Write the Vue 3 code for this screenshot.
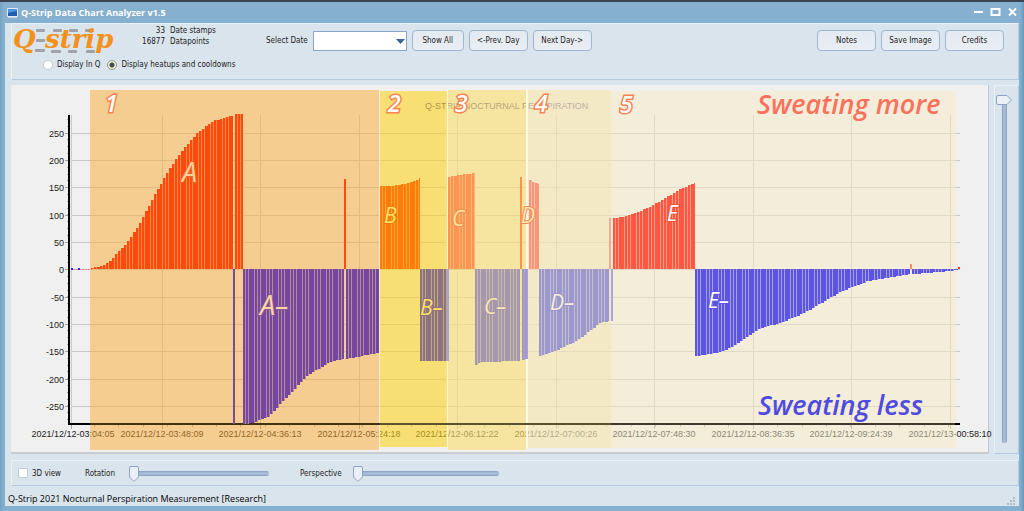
<script setup>
import { ref } from 'vue'

const mode = ref('heat')
const view3d = ref(false)
const rotation = ref(0)
const perspective = ref(0)
const zoom = ref(100)

const yTicks = [250, 200, 150, 100, 50, 0, -50, -100, -150, -200, -250].map((value, i) => ({
  value,
  y: Math.round(132.8 + i * 27.3)
}))
const yMinor = Array.from({ length: 45 }, (_, i) => Math.round(119 + i * 6.82))

const xTicks = [
  [73, '2021/12/12-03:04:05'],
  [162, '2021/12/12-03:48:09'],
  [260, '2021/12/12-04:36:13'],
  [359, '2021/12/12-05:24:18'],
  [457, '2021/12/12-06:12:22'],
  [556, '2021/12/12-07:00:26'],
  [654, '2021/12/12-07:48:30'],
  [753, '2021/12/12-08:36:35'],
  [851, '2021/12/12-09:24:39'],
  [950, '2021/12/13-00:58:10']
].map(([x, text]) => ({ x, text }))
const xMinor = Array.from({ length: 36 }, (_, i) => Math.round(94 + i * 24.4))

const regions = [
  { x: 90, y: 90, w: 289, h: 360, fill: 'rgba(251,169,49,.5)' },
  { x: 380, y: 91, w: 67, h: 356, fill: 'rgba(251,211,32,.6)' },
  { x: 448, y: 90, w: 78, h: 360, fill: 'rgba(248,222,117,.65)' },
  { x: 528, y: 90, w: 83, h: 358, fill: 'rgba(243,230,178,.7)' },
  { x: 611, y: 91, w: 345, h: 357, fill: 'rgba(245,233,195,.5)' }
]

const ZERO = 269
const series = [
  { dark: '#ff4a0c', light: '#fd8a4c', pts: [[91, 268], [98, 267], [106, 264], [113, 258], [118, 252], [127, 243], [140, 223], [153, 198], [167, 173], [180, 153], [197, 133], [213, 121], [230, 116], [233, 116]] },
  { dark: '#ff4a0c', light: '#fd8a4c', pts: [[235, 114], [243, 114]] },
  { dark: '#7a4aa0', light: '#7a4aa0', pts: [[233, 424], [235, 424]] },
  { dark: '#7547a0', light: '#b48c96', pts: [[243, 424], [252, 423], [268, 417], [287, 397], [308, 375], [332, 361], [344, 359]] },
  { dark: '#ff4a0c', light: '#ff4a0c', pts: [[344, 179], [346, 179]] },
  { dark: '#7547a0', light: '#b48c96', pts: [[346, 359], [362, 356], [379, 353]] },
  { dark: '#ff7c0a', light: '#fca638', pts: [[380, 186], [392, 186], [403, 184], [413, 182], [420, 178]] },
  { dark: '#8d7280', light: '#bfaa7c', pts: [[420, 361], [447, 361]] },
  { dark: '#a6a2e0', light: '#a6a2e0', pts: [[447, 361], [449, 361]] },
  { dark: '#fb9650', light: '#f9b67c', pts: [[448, 177], [460, 175], [475, 173]] },
  { dark: '#a598ad', light: '#cabca8', pts: [[475, 366], [480, 362], [520, 361]] },
  { dark: '#fb9650', light: '#fb9650', pts: [[520, 177], [522, 177]] },
  { dark: '#a598c0', light: '#a6a2e8', pts: [[522, 360], [528, 359]] },
  { dark: '#f8977a', light: '#f5bca4', pts: [[529, 180], [539, 184]] },
  { dark: '#9c97cc', light: '#c4bdca', pts: [[539, 356], [553, 352], [563, 347], [577, 341], [587, 333], [600, 323], [609, 321]] },
  { dark: '#f9a890', light: '#f9a890', pts: [[609, 218], [611, 218]] },
  { dark: '#a9a5e4', light: '#a9a5e4', pts: [[611, 321], [613, 321]] },
  { dark: '#ff5742', light: '#f89c86', pts: [[613, 218], [623, 217], [633, 214], [650, 207], [667, 197], [680, 189], [695, 183]] },
  { dark: '#5c55e2', light: '#a5a0dc', pts: [[695, 356], [703, 355], [717, 353], [730, 348], [743, 340], [760, 328], [780, 323], [800, 315], [813, 308], [840, 292], [868, 281], [887, 278], [910, 274]] },
  { dark: '#f98a74', light: '#f98a74', pts: [[910, 264], [912, 264]] },
  { dark: '#5c55e2', light: '#a5a0dc', pts: [[912, 274], [940, 272], [958, 270]] }
]

function heightAt(pts, x) {
  for (let i = 1; i < pts.length; i++) {
    const [ax, ay] = pts[i - 1]
    const [bx, by] = pts[i]
    if (x <= bx) return ay + ((by - ay) * Math.max(0, x - ax)) / (bx - ax)
  }
  return pts[pts.length - 1][1]
}

function column(x, w, y) {
  return `M${x} ${ZERO}V${Math.round(y)}h${w}V${ZERO}z`
}

const bars = series.map((s) => {
  const start = s.pts[0][0]
  const end = s.pts[s.pts.length - 1][0]
  let back = ''
  let front = ''
  for (let x = start, i = 0; x < end; x += 3, i++) {
    const w = Math.min(3, end - x)
    const y = heightAt(s.pts, x + 1)
    back += column(x, w, y)
    front += column(x, i % 4 === 2 ? w : Math.min(2, w), y)
  }
  return { ...s, back, front }
})

const numbers = [
  { t: '1', x: 105, y: 112 }, { t: '2', x: 388, y: 112 }, { t: '3', x: 455, y: 112 },
  { t: '4', x: 535, y: 112 }, { t: '5', x: 620, y: 113 }
]
const letters = [
  { t: 'A', x: 182, y: 182, c: '#fbd495', o: '#f0602c', s: 27 },
  { t: 'A–', x: 260, y: 315, c: '#fbd8a8', o: '#8a5a90', s: 27 },
  { t: 'B', x: 384, y: 223, c: '#ffe066', o: '#f08010', s: 21 },
  { t: 'B–', x: 420, y: 315, c: '#ffe066', o: '#8d7280', s: 21 },
  { t: 'C', x: 452, y: 226, c: '#f9e49c', o: '#f59050', s: 21 },
  { t: 'C–', x: 484, y: 314, c: '#f9e8ae', o: '#a598ad', s: 21 },
  { t: 'D', x: 521, y: 223, c: '#fbe6a8', o: '#f08a5c', s: 21 },
  { t: 'D–', x: 550, y: 310, c: '#f7efd6', o: '#9c97cc', s: 21 },
  { t: 'E', x: 667, y: 221, c: '#ffffff', o: '#f0503c', s: 21 },
  { t: 'E–', x: 708, y: 308, c: '#ffffff', o: '#5c55e2', s: 21 }
]
</script>

<template>
  <div class="window">
    <header class="titlebar">
      <svg class="appicon" width="11" height="10" viewBox="0 0 11 10" aria-hidden="true">
        <rect x="0" y="0" width="11" height="9" rx="1" fill="#dfeaf5" />
        <rect x="1" y="1" width="9" height="7" fill="#1d5cae" />
        <path d="M1 1h9v2L1 5z" fill="#4f93dc" />
        <rect x="1" y="9" width="9" height="1" fill="#c9d6e4" />
      </svg>
      <h1>Q-Strip Data Chart Analyzer v1.5</h1>
      <div class="winbtns">
        <button type="button" aria-label="Minimize">
          <svg width="11" height="10" viewBox="0 0 11 10"><path d="M1 4h9" stroke="#fff" stroke-width="2" /></svg>
        </button>
        <button type="button" aria-label="Maximize">
          <svg width="11" height="10" viewBox="0 0 11 10"><path d="M1.500 1h8v6h-8z" fill="none" stroke="#fff" stroke-width="2" /></svg>
        </button>
        <button type="button" aria-label="Close">
          <svg width="11" height="10" viewBox="0 0 11 10"><path d="M2 .5l7 7M9 .5l-7 7" stroke="#fff" stroke-width="2" /></svg>
        </button>
      </div>
    </header>

    <main class="client">
      <section class="panel toolbar">
        <div class="info">
          <div class="inforow">
            <svg class="logo" width="104" height="32" viewBox="0 0 104 32" role="img" aria-label="Q-strip">
              <g fill="#9fa3a8">
                <rect x="23" y="5" width="9" height="3" rx="1" /><rect x="40" y="5" width="9" height="3" rx="1" />
                <rect x="56" y="5" width="9" height="3" rx="1" /><rect x="72" y="5" width="9" height="3" rx="1" />
                <rect x="23" y="15" width="9" height="3" rx="1" />
                <rect x="22" y="25" width="10" height="3" rx="1" /><rect x="38" y="26" width="10" height="3" rx="1" />
                <rect x="55" y="26" width="9" height="3" rx="1" /><rect x="73" y="26" width="9" height="3" rx="1" />
              </g>
              <text class="logotext" x="0" y="24">Q</text>
              <text class="logotext" x="32" y="24">strip</text>
            </svg>
            <dl class="counts">
              <dd>33</dd><dt>Date stamps</dt>
              <dd>16877</dd><dt>Datapoints</dt>
            </dl>
          </div>
          <div class="radios">
            <label><input v-model="mode" type="radio" name="mode" value="q" />Display In Q</label>
            <label><input v-model="mode" type="radio" name="mode" value="heat" />Display heatups and cooldowns</label>
          </div>
        </div>
        <div class="actions">
          <label for="date">Select Date</label>
          <span class="combo">
            <select id="date"><option value=""></option></select>
            <svg width="9" height="5" viewBox="0 0 9 5" aria-hidden="true"><path d="M0 0h9L4.500 5z" fill="#3f5f97" /></svg>
          </span>
          <button type="button" class="btn narrow">Show All</button>
          <button type="button" class="btn">&lt;-Prev. Day</button>
          <button type="button" class="btn">Next Day-&gt;</button>
          <span class="spacer"></span>
          <button type="button" class="btn">Notes</button>
          <button type="button" class="btn">Save Image</button>
          <button type="button" class="btn">Credits</button>
        </div>
      </section>

      <section class="middle">
        <div class="chart">
          <svg viewBox="11 85 977 367" role="img" aria-label="Q-Strip nocturnal perspiration">
            <g shape-rendering="crispEdges">
              <path v-for="t in yTicks" :key="'g' + t.value" :d="`M71 ${t.y + 0.5}H960`" class="grid" />
              <path v-for="t in xTicks" :key="'v' + t.x" :d="`M${(t.x === 73 ? 71 : t.x) + 0.5} 115V424`" class="grid" />
              <path v-for="t in yTicks" :key="'t' + t.value" :d="`M65 ${t.y + 0.5}h4`" class="tick" />
              <path v-for="y in yMinor" :key="'m' + y" :d="`M67 ${y + 0.5}h2`" class="tick" />
              <path v-for="t in xTicks" :key="'x' + t.x" :d="`M${(t.x === 73 ? 71 : t.x) + 0.5} 425v4`" class="tick" />
              <path v-for="x in xMinor" :key="'n' + x" :d="`M${x + 0.5} 425v2`" class="tick" />
            </g>
            <text class="title" x="425" y="109">Q-STRIP NOCTURNAL PERSPIRATION</text>
            <text v-for="t in yTicks" :key="t.value" class="ylabel" x="64" :y="t.y + 4">{{ t.value }}</text>
            <text v-for="t in xTicks" :key="t.text" class="xlabel" :x="t.x" y="437">{{ t.text }}</text>

            <g shape-rendering="crispEdges">
              <rect x="379" y="90" width="1" height="358" fill="#fbf3e0" />
              <rect x="446" y="90" width="2" height="358" fill="#fdf6dc" />
              <rect x="526" y="90" width="2" height="358" fill="#fdf8ea" />
              <rect v-for="r in regions" :key="r.x" :x="r.x" :y="r.y" :width="r.w" :height="r.h" :fill="r.fill" />
              <path d="M70 424H90" stroke="#000" stroke-width="2" />
              <path d="M90 424H380" stroke="#42300f" stroke-width="2" />
              <path d="M380 424H611" stroke="#5d5030" stroke-width="2" />
              <path d="M611 424H955" stroke="#403a2e" stroke-width="2" />
              <path d="M955 424h5" stroke="#000" stroke-width="2" />
              <path d="M69 115V425" stroke="#000" stroke-width="2" />
              <path d="M73 269.500H92" stroke="#e98080" stroke-dasharray="2 1" />
              <path d="M71 269h2M78 269h2" stroke="#3030e0" stroke-width="2" />
              <g v-for="(b, i) in bars" :key="i">
                <path :d="b.back" :fill="b.light" />
                <path :d="b.front" :fill="b.dark" />
              </g>
              <path d="M958 268h2" stroke="#ff3020" stroke-width="2" />
            </g>

            <text v-for="n in numbers" :key="n.t" class="number" :x="n.x" :y="n.y">{{ n.t }}</text>
            <text v-for="l in letters" :key="l.t" class="letter" :x="l.x" :y="l.y" :fill="l.c" :stroke="l.o" :font-size="l.s">{{ l.t }}</text>
            <text class="note more" x="757" y="114">Sweating more</text>
            <text class="note less" x="758" y="415">Sweating less</text>
          </svg>
        </div>
        <div class="side">
          <input v-model="zoom" class="vslider" type="range" min="0" max="100" aria-label="Zoom" />
        </div>
      </section>

      <section class="panel controls">
        <label class="check"><input v-model="view3d" type="checkbox" />3D view</label>
        <label class="slide rot"><span>Rotation</span><input v-model="rotation" type="range" min="0" max="100" /></label>
        <label class="slide per"><span>Perspective</span><input v-model="perspective" type="range" min="0" max="100" /></label>
      </section>

      <footer class="status">
        <span>Q-Strip 2021 Nocturnal Perspiration Measurement [Research]</span>
        <svg width="9" height="9" viewBox="0 0 9 9" fill="#b2bcc6" aria-hidden="true">
          <path d="M6 0h2v2H6zM3 3h2v2H3zM6 3h2v2H6zM0 6h2v2H0zM3 6h2v2H3zM6 6h2v2H6z" />
        </svg>
      </footer>
    </main>
  </div>
</template>

<style>
body {
  margin: 0;
  background: #7ba8c9;
}
</style>

<style scoped>
.window {
  box-sizing: border-box;
  min-height: 100vh;
  display: flex;
  flex-direction: column;
  padding: 0 5px 5px;
  border-top: 2px solid #3b4350;
  background: linear-gradient(90deg, #73a3c5, #86b0cf 4px, #86b0cf calc(100% - 4px), #6699bd);
  font-family: "DejaVu Sans Condensed", "DejaVu Sans", sans-serif;
  font-size: 8px;
  line-height: 11px;
  color: #1c1c1c;
}
button, select, input {
  font: inherit;
  color: inherit;
  margin: 0;
}
.titlebar {
  display: flex;
  align-items: center;
  height: 21px;
  padding: 0 1px 0 2px;
}
h1 {
  flex: 1;
  margin: 0 0 0 3px;
  font: 700 9px/12px "Open Sans", "Noto Sans", sans-serif;
  color: #fff;
}
.winbtns {
  display: flex;
  gap: 6px;
}
.winbtns button {
  display: flex;
  padding: 0;
  border: 0;
  background: none;
}
.client {
  flex: 1;
  display: flex;
  flex-direction: column;
  gap: 5px;
  padding: 0 0 0 6px;
  background: #dae4ed;
}
.panel {
  box-sizing: border-box;
  border: 1px solid #e9f0f6;
  border-right-color: #b2cbe0;
  border-bottom-color: #b2cbe0;
}
.toolbar {
  display: flex;
  height: 57px;
}
.info {
  width: 254px;
}
.inforow {
  display: flex;
  height: 35px;
}
.logo {
  margin-left: 1px;
}
.logotext {
  font: italic 700 26px "DejaVu Serif", serif;
  fill: #f3911b;
}
.counts {
  display: grid;
  grid-template-columns: 48px auto;
  gap: 0 5px;
  align-content: start;
  margin: 1px 0 0;
}
.counts dd, .counts dt {
  margin: 0;
}
.counts dd {
  text-align: right;
}
.radios {
  display: flex;
  gap: 7px;
  padding-left: 31px;
}
.radios label, .check {
  display: flex;
  align-items: center;
  gap: 4px;
  white-space: nowrap;
}
input[type="radio"] {
  appearance: none;
  width: 10px;
  height: 10px;
  border: 1px solid #c2ccd8;
  border-radius: 50%;
  background: #fff;
}
input[type="radio"]:checked {
  border-color: #8d96a4;
  background: radial-gradient(circle, #3d4860 0 2px, #fbf3bb 3px);
}
.actions {
  flex: 1;
  display: flex;
  align-items: center;
  align-self: flex-start;
  gap: 5px;
  padding: 6px 14px 0 0;
}
.combo {
  position: relative;
}
.combo select {
  appearance: none;
  display: block;
  width: 94px;
  height: 20px;
  border: 1px solid #8ba7c6;
  border-radius: 0;
  background: #fff;
}
.combo svg {
  position: absolute;
  right: 2px;
  top: 8px;
}
.btn {
  width: 59px;
  height: 21px;
  padding: 0;
  border: 1px solid #9fb6d0;
  border-radius: 4px;
  background: linear-gradient(#e3eaf1, #e9eef4);
  white-space: nowrap;
}
.btn.narrow {
  width: 52px;
}
.spacer {
  flex: 1;
}
.middle {
  display: flex;
  gap: 5px;
}
.chart {
  flex: 1;
  min-width: 0;
  background: #f0f0f0;
  border-right: 1px solid #c4c8cb;
  border-bottom: 2px solid #c9cccf;
}
.chart svg {
  display: block;
  width: 100%;
  height: auto;
  overflow: visible;
}
.grid {
  stroke: #c8c8cb;
}
.tick {
  stroke: #a4a4a4;
}
.title, .ylabel, .xlabel {
  font: 9px "Liberation Sans", Arial, sans-serif;
  fill: #222;
}
.title {
  fill: #41308c;
}
.ylabel {
  text-anchor: end;
}
.xlabel {
  text-anchor: middle;
}
.number, .letter, .note {
  font-family: "Segoe Print", "Bradley Hand", "Open Sans", sans-serif;
  font-style: italic;
  paint-order: stroke;
}
.number {
  font-size: 23px;
  font-weight: 600;
  fill: #fff;
  stroke: #f98250;
  stroke-width: 3px;
}
.letter {
  stroke-width: 2px;
}
.note {
  font-size: 27px;
  font-weight: 600;
}
.more {
  fill: #fb725c;
}
.less {
  fill: #514adf;
}
.side {
  box-sizing: border-box;
  width: 25px;
  display: flex;
  border: 1px solid #e9f0f6;
  border-right-color: #b2cbe0;
  border-bottom-color: #b2cbe0;
}
input[type="range"] {
  appearance: none;
  background: none;
}
.vslider {
  writing-mode: vertical-lr;
  direction: rtl;
  width: 16px;
  height: auto;
  margin: 9px 0 10px 1px;
}
.vslider::-webkit-slider-runnable-track {
  width: 5px;
  border-radius: 2px;
  background: linear-gradient(90deg, #889fbf, #aabfd8 2px, #aabfd8 3px, #889fbf);
}
.vslider::-webkit-slider-thumb {
  appearance: none;
  width: 16px;
  height: 10px;
  margin-left: -6px;
  background: url("data:image/svg+xml,%3Csvg xmlns='http://www.w3.org/2000/svg' width='16' height='10'%3E%3Cpath d='M2 .5h9l4.500 4.500-4.500 4.500H2Q.5 9.500.5 8V2Q.5.5 2 .5z' fill='%23eaf0f6' stroke='%238ba3c4'/%3E%3C/svg%3E");
}
.controls {
  display: flex;
  align-items: center;
  height: 26px;
  margin-top: 1px;
  padding-left: 6px;
}
.check {
  width: 67px;
}
.check input {
  appearance: none;
  width: 10px;
  height: 10px;
  border: 1px solid #c2ccd8;
  border-radius: 1px;
  background: #fff;
}
.check input:checked {
  background: #5577aa;
}
.slide {
  display: flex;
  align-items: center;
}
.slide input {
  width: 140px;
  height: 16px;
}
.rot {
  width: 215px;
}
.rot span {
  width: 44px;
}
.per span {
  width: 53px;
}
.per input {
  width: 146px;
}
.slide input::-webkit-slider-runnable-track {
  height: 5px;
  border-radius: 2px;
  background: linear-gradient(#889fbf, #aabfd8 2px, #aabfd8 3px, #889fbf);
}
.slide input::-webkit-slider-thumb {
  appearance: none;
  width: 10px;
  height: 16px;
  margin-top: -5px;
  background: url("data:image/svg+xml,%3Csvg xmlns='http://www.w3.org/2000/svg' width='10' height='16'%3E%3Cpath d='M.5 2Q.5.5 2 .5h6Q9.500.5 9.500 2v9L5 15.500.5 11z' fill='%23eaf0f6' stroke='%238ba3c4'/%3E%3C/svg%3E");
}
.status {
  flex: 1;
  display: flex;
  align-items: center;
  justify-content: space-between;
  margin: 0 0 0 -3px;
  padding-right: 3px;
  font: 9px/14px "Open Sans", "Noto Sans", sans-serif;
  color: #000;
}
.status svg {
  align-self: flex-end;
}
</style>
